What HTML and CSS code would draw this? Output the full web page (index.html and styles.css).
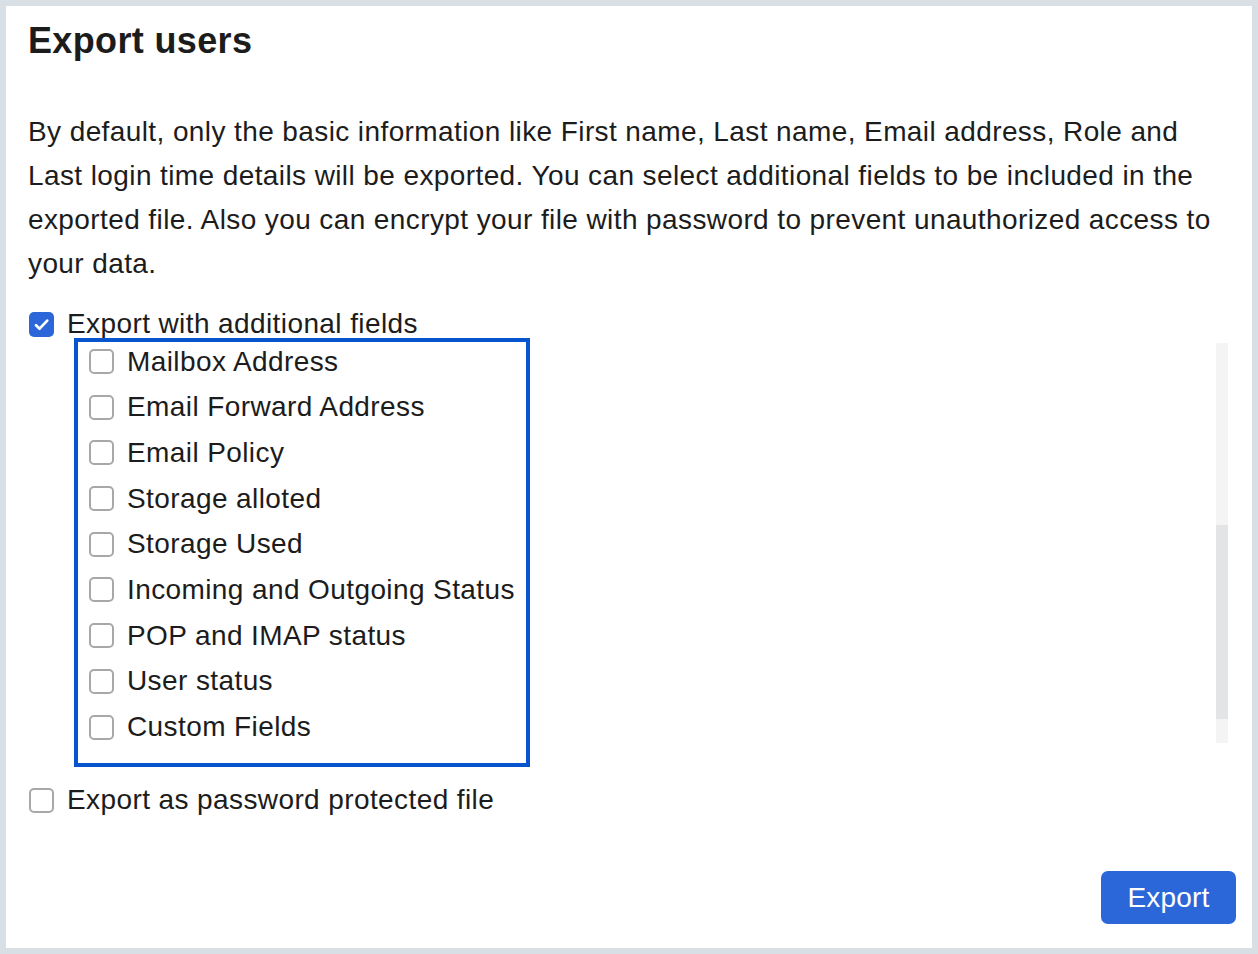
FILE: index.html
```html
<!DOCTYPE html>
<html lang="en">
<head>
  <meta charset="UTF-8" />
  <meta name="viewport" content="width=device-width, initial-scale=1.0" />
  <title>Export users</title>
  <link rel="stylesheet" href="styles.css">
</head>
<body>
  <div class="panel">
    <h1>Export users</h1>
    <p class="intro">By default, only the basic information like First name, Last name, Email address, Role and Last login time details will be exported. You can select additional fields to be included in the exported file. Also you can encrypt your file with password to prevent unauthorized access to your data.</p>

    <label class="check-row">
      <span class="box checked">
        <svg viewBox="0 0 25 25" width="25" height="25"><path d="M7 13.2l3.6 3.5L18.2 8.6" fill="none" stroke="#fff" stroke-width="2.7" stroke-linecap="round" stroke-linejoin="round"/></svg>
      </span>
      Export with additional fields
    </label>

    <div class="fields-area">
      <div class="fields">
        <label class="field"><span class="box"></span>Mailbox Address</label>
        <label class="field"><span class="box"></span>Email Forward Address</label>
        <label class="field"><span class="box"></span>Email Policy</label>
        <label class="field"><span class="box"></span>Storage alloted</label>
        <label class="field"><span class="box"></span>Storage Used</label>
        <label class="field"><span class="box"></span>Incoming and Outgoing Status</label>
        <label class="field"><span class="box"></span>POP and IMAP status</label>
        <label class="field"><span class="box"></span>User status</label>
        <label class="field"><span class="box"></span>Custom Fields</label>
      </div>
      <div class="track"><div class="thumb"></div></div>
    </div>

    <label class="check-row password-row">
      <span class="box"></span>
      Export as password protected file
    </label>

    <div class="actions">
      <button class="export-btn">Export</button>
    </div>
  </div>
</body>
</html>
```

FILE: styles.css
```css
body {
  margin: 0;
  padding: 6px;
  background: #d9e0e5;
  font-family: "Liberation Sans", Arial, sans-serif;
  color: #1c1c1c;
  letter-spacing: 0.4px;
}
.panel {
  background: #fff;
  height: 942px;
  box-sizing: border-box;
  padding: 15px 16px 0 22px;
}
h1 {
  margin: 0;
  font-size: 36px;
  line-height: 40px;
  font-weight: bold;
  letter-spacing: 0.35px;
}
.intro {
  margin: 49px 10px 0 0;
  font-size: 28px;
  line-height: 44px;
}
.check-row {
  display: flex;
  align-items: center;
  gap: 13px;
  height: 30px;
  margin-top: 23px;
  padding-left: 1px;
  font-size: 28px;
}
.box {
  width: 25px;
  height: 25px;
  box-sizing: border-box;
  border: 2px solid #a8a8a8;
  border-radius: 5px;
  background: #fff;
  flex: none;
  display: flex;
  align-items: center;
  justify-content: center;
}
.box.checked {
  background: #2c67d9;
  border: none;
}
.fields-area {
  display: flex;
  justify-content: space-between;
  margin-top: -1px;
  margin-left: 46px;
  margin-right: 8px;
}
.fields {
  width: 456px;
  height: 429px;
  box-sizing: border-box;
  border: 4px solid #0655cf;
  padding: 0 0 0 11px;
  display: flex;
  flex-direction: column;
  gap: 6.7px;
}
.field {
  display: flex;
  align-items: center;
  gap: 13px;
  height: 39px;
  font-size: 28px;
  white-space: nowrap;
}
.track {
  width: 12px;
  height: 400px;
  margin-top: 5px;
  background: #f4f4f4;
}
.thumb {
  margin-top: 182px;
  height: 194px;
  background: #e3e4e6;
}
.password-row {
  margin-top: 18px;
}
.actions {
  display: flex;
  justify-content: flex-end;
  margin-top: 56px;
}
.export-btn {
  width: 135px;
  height: 53px;
  background: #2c67d9;
  border: none;
  border-radius: 7px;
  color: #fff;
  font-family: "Liberation Sans", Arial, sans-serif;
  font-size: 28px;
  letter-spacing: 0.2px;
  padding: 0;
  cursor: pointer;
}
```
